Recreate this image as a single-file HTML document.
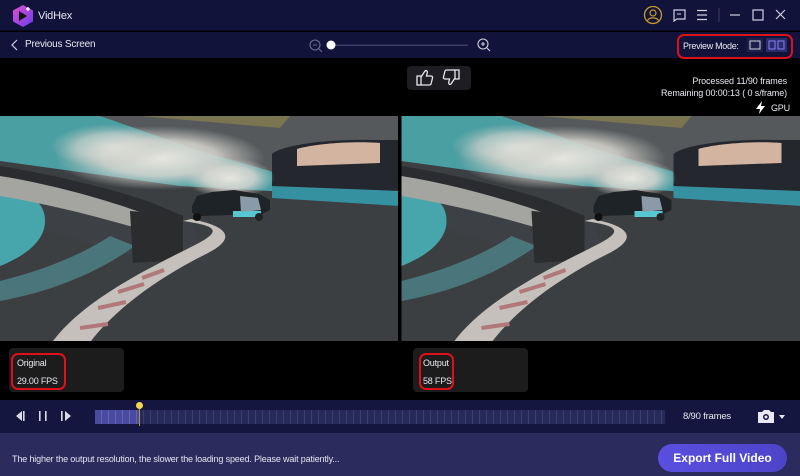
<!DOCTYPE html>
<html><head><meta charset="utf-8"><style>
*{margin:0;padding:0;box-sizing:border-box}
body{width:800px;height:476px;overflow:hidden;background:#000;font-family:"Liberation Sans",sans-serif;position:relative;color:#fff}
.abs{position:absolute}
#title{left:0;top:0;width:800px;height:31px;background:#11133a;border-bottom:1px solid #070820}
#tool{left:0;top:32px;width:800px;height:26px;background:#11133a}
.txt{font-size:10px;color:#e8e8f0;white-space:nowrap;letter-spacing:-0.2px}
#tl{left:0;top:400px;width:800px;height:33px;background:#141640}
#bot{left:0;top:433px;width:800px;height:43px;background:#2b2b5e}
.box{background:#1c1c1c;border-radius:4px}
.red{border:2px solid #e0101a;border-radius:7px}
</style></head><body>
<div id="title" class="abs"></div>
<svg class="abs" style="left:12px;top:4px" width="22" height="24" viewBox="0 0 22 24">
<defs><linearGradient id="lg" x1="0" y1="0" x2="1" y2="1"><stop offset="0" stop-color="#e24fd0"/><stop offset="1" stop-color="#6a3cf0"/></linearGradient></defs>
<path d="M11 1 L21 6.5 V17.5 L11 23 L1 17.5 V6.5Z" fill="url(#lg)"/>
<path d="M7 7 L15 12 L7 17Z" fill="#111"/><path d="M16 3v4M14 5h4" stroke="#fff" stroke-width="1.3"/>
</svg>
<div class="abs txt" style="left:38px;top:10px;font-size:11px">VidHex</div>
<svg class="abs" style="left:643px;top:6px" width="150" height="20" viewBox="0 0 150 20">
<circle cx="10" cy="9" r="8.5" fill="none" stroke="#c79a2c" stroke-width="1.3"/><circle cx="10" cy="7" r="3" fill="none" stroke="#c79a2c" stroke-width="1.2"/><path d="M4.5 14.5c2-3.5 9-3.5 11 0" fill="none" stroke="#c79a2c" stroke-width="1.2"/>
<path d="M31 4h11v9h-8l-3 2z" fill="none" stroke="#cfd0e0" stroke-width="1.2"/><path d="M34 8h4" stroke="#cfd0e0"/>
<path d="M54 4.5h10M54 9h10M54 13.5h10" stroke="#cfd0e0" stroke-width="1.2"/>
<path d="M76 2v14" stroke="#3a3c66"/>
<path d="M87 9h10" stroke="#cfd0e0" stroke-width="1.2"/>
<rect x="110" y="4" width="10" height="10" fill="none" stroke="#cfd0e0" stroke-width="1.2"/>
<path d="M133 4l9 9M142 4l-9 9" stroke="#cfd0e0" stroke-width="1.2"/>
</svg>
<div id="tool" class="abs"></div>
<svg class="abs" style="left:10px;top:38px" width="10" height="14"><path d="M7 2L2 7l5 5" fill="none" stroke="#cfd0e0" stroke-width="1.2"/></svg>
<div class="abs txt" style="left:25px;top:39px">Previous Screen</div>
<svg class="abs" style="left:308px;top:38px" width="185" height="16" viewBox="0 0 185 16">
<circle cx="7" cy="7" r="5" fill="none" stroke="#6c6e90" stroke-width="1.1"/><path d="M5 7h4M11 11l3 3" stroke="#6c6e90" stroke-width="1.1"/>
<rect x="22" y="6.5" width="138" height="1.5" fill="#3c3e66"/><circle cx="23" cy="7" r="4.5" fill="#fff"/>
<circle cx="175" cy="6" r="5" fill="none" stroke="#cfd0e0" stroke-width="1.1"/><path d="M173 6h4M175 4v4M179 10l3 3" stroke="#cfd0e0" stroke-width="1.1"/>
</svg>
<div class="abs red" style="left:677px;top:34px;width:116px;height:25px"></div>
<div class="abs txt" style="left:683px;top:41px;font-size:9px;letter-spacing:-0.3px">Preview Mode:</div>
<svg class="abs" style="left:747px;top:38px" width="42" height="14" viewBox="0 0 42 14">
<rect x="0" y="0" width="16" height="14" fill="#1c1f4a"/><rect x="3" y="3" width="10" height="8" fill="none" stroke="#d0d0e0" stroke-width="1"/>
<rect x="19" y="0" width="21" height="14" fill="#2a2d6a"/><rect x="22" y="3" width="6" height="8" fill="none" stroke="#8a80ff"/><rect x="31" y="3" width="6" height="8" fill="none" stroke="#8a80ff"/>
</svg>
<div class="abs" style="left:407px;top:66px;width:64px;height:24px;background:#1d1d22;border-radius:4px"></div>
<svg class="abs" style="left:415px;top:68px" width="50" height="20" viewBox="0 0 50 20">
<path d="M2 8h4v9H2zM6 9l4-6c1.5-1 2.5 0 2.3 1.5L11.5 8H16c1.2 0 1.8 1 1.5 2l-1.5 6c-.3 1-1 1-2 1H6" fill="none" stroke="#e8e8f0" stroke-width="1.3"/>
<path d="M44 11h-4V2h4zM40 10l-4 6c-1.5 1-2.5 0-2.3-1.5l.8-3.5H30c-1.2 0-1.8-1-1.5-2l1.5-6c.3-1 1-1 2-1h8" fill="none" stroke="#e8e8f0" stroke-width="1.3"/>
</svg>
<div class="abs txt" style="right:13px;top:75px;text-align:right;font-size:9px;line-height:12px;letter-spacing:-0.1px">Processed 11/90 frames<br>Remaining 00:00:13 ( 0 s/frame)</div>
<svg class="abs" style="left:755px;top:101px" width="12" height="13"><path d="M7 0L1 8h4l-1 5 6-8H6z" fill="#fff"/></svg>
<div class="abs txt" style="left:771px;top:103px;font-size:9px">GPU</div>

<svg width="0" height="0" style="position:absolute"><defs>
<radialGradient id="smk" cx=".5" cy=".5" r=".5"><stop offset="0" stop-color="#e8e6e0"/><stop offset=".55" stop-color="#d8d6d0" stop-opacity=".85"/><stop offset="1" stop-color="#c8c8c2" stop-opacity="0"/></radialGradient>
<g id="scene">
<rect width="400" height="225" fill="#3c3f42"/>
<path d="M0 0H400V70L270 75 180 70 0 45Z" fill="#4a9fa3"/>
<path d="M100 0H400V80L300 70 270 55 200 35Z" fill="#55595c"/>
<path d="M140 0h150l-10 12z" fill="#7a7550"/>
<path d="M272 38c12-10 60-15 100-14h28v55l-128-5z" fill="#24272d"/>
<path d="M297 33c20-6 60-8 83-6v20l-83 3z" fill="#d2b4a0"/>
<path d="M272 70l128 5v15l-128-8z" fill="#3590a0"/>
<path d="M0 70c50 5 110 20 150 30l40 5 20 40-60 0L0 100z" fill="#3d4146"/>
<path d="M0 75c30 2 45 10 45 30s-20 35-45 45z" fill="#46a6ac"/>
<path d="M0 165c40-10 80-25 110-45l25 10c-35 25-80 45-135 55z" fill="#4e8388" opacity=".8"/>
<path d="M0 50c50 8 110 22 150 36l33 14v6l-50-6L0 62z" fill="#2a2c30"/>
<path d="M0 60c50 8 100 22 140 36l3 18c-40-12-90-25-143-34z" fill="#a4a4a0"/>
<path d="M130 95l53 4v45l-50 3z" fill="#2a2c2e"/>
<path d="M53 225c30-40 90-70 140-95 30-15 25-20-10-25l8-2c40 8 45 20 15 35-50 25-90 55-115 87z" fill="#c6c0bc"/>
<path d="M80 212l28-4M98 192l28-6M118 176l26-8M142 162l22-8" stroke="#b07878" stroke-width="4"/>
<ellipse cx="160" cy="42" rx="105" ry="32" fill="url(#smk)"/>
<ellipse cx="230" cy="62" rx="45" ry="20" fill="url(#smk)"/>
<ellipse cx="110" cy="30" rx="60" ry="22" fill="url(#smk)" opacity=".7"/>
<path d="M192 90l5-10 15-4 22-2 25 4 11 6 0 10-8 4-62 2-8-3z" fill="#1e2328"/>
<path d="M233 101h28v-6h-28z" fill="#58c8d0"/>
<path d="M240 80l18 2 3 12-20 2z" fill="#8a9aa8"/>
<circle cx="197" cy="101" r="4" fill="#111"/><circle cx="259" cy="101" r="4" fill="#222"/>
</g></defs></svg>
<svg class="abs" style="left:0;top:116px" width="398" height="225" viewBox="0 0 398 225"><use href="#scene"/></svg>
<svg class="abs" style="left:401px;top:116px" width="399" height="225" viewBox="0 0 398 225"><use href="#scene"/></svg>

<div class="abs box" style="left:9px;top:348px;width:115px;height:44px"></div>
<div class="abs red" style="left:11px;top:353px;width:55px;height:37px"></div>
<div class="abs txt" style="left:17px;top:358px;font-size:9px">Original</div>
<div class="abs txt" style="left:17px;top:376px;font-size:9px">29.00 FPS</div>
<div class="abs box" style="left:413px;top:348px;width:115px;height:44px"></div>
<div class="abs red" style="left:419px;top:353px;width:35px;height:37px"></div>
<div class="abs txt" style="left:423px;top:358px;font-size:9px">Output</div>
<div class="abs txt" style="left:423px;top:376px;font-size:9px">58 FPS</div>

<div id="tl" class="abs"></div>
<svg class="abs" style="left:14px;top:409px" width="62" height="14" viewBox="0 0 62 14">
<path d="M8 2L2 7l6 5z" fill="#d8d8e8"/><rect x="9" y="2" width="1.6" height="10" fill="#d8d8e8"/>
<rect x="25" y="2" width="1.6" height="10" fill="#d8d8e8"/><rect x="31" y="2" width="1.6" height="10" fill="#d8d8e8"/>
<rect x="47" y="2" width="1.6" height="10" fill="#d8d8e8"/><path d="M51 2l6 5-6 5z" fill="#d8d8e8"/>
</svg>
<div class="abs" style="left:95px;top:410px;width:570px;height:14px;background:repeating-linear-gradient(90deg,#262a58 0 6px,#3a3e70 6px 7px)"></div>
<div class="abs" style="left:95px;top:410px;width:44px;height:14px;background:repeating-linear-gradient(90deg,#4a4aa0 0 6px,#6464b8 6px 7px)"></div>
<div class="abs" style="left:139px;top:405px;width:1px;height:21px;background:#b99a30"></div>
<div class="abs" style="left:136px;top:402px;width:7px;height:7px;border-radius:50%;background:#f5d94a"></div>
<div class="abs txt" style="left:683px;top:411px;font-size:9.5px">8/90 frames</div>
<svg class="abs" style="left:757px;top:408px" width="32" height="16" viewBox="0 0 32 16">
<path d="M1 4h4l2-2h5l2 2h3v11H1z" fill="#e8e8f4"/><circle cx="9" cy="9" r="3" fill="#141640"/><circle cx="9" cy="9" r="1.5" fill="#e8e8f4"/>
<path d="M22 7h6l-3 4z" fill="#e8e8f4"/>
</svg>

<div id="bot" class="abs"></div>
<div class="abs txt" style="left:12px;top:454px;font-size:9px;color:#e4e4ee;letter-spacing:-0.15px">The higher the output resolution, the slower the loading speed. Please wait patiently...</div>
<div class="abs" style="left:658px;top:444px;width:129px;height:28px;border-radius:14px;background:linear-gradient(90deg,#5a4fe0,#4c44c8);color:#fff;font-size:12px;font-weight:bold;text-align:center;line-height:28px">Export Full Video</div>
</body></html>
